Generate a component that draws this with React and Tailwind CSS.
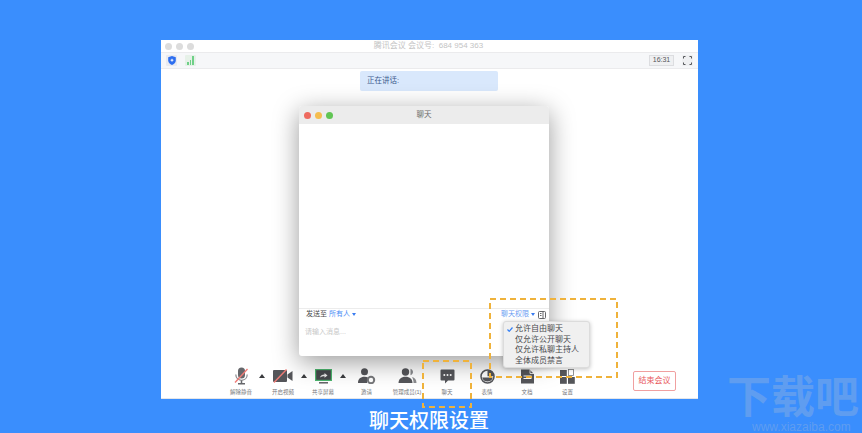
const cjk = "font-['Liberation_Sans','Noto_Sans_CJK_SC',sans-serif]";

const MicIcon = () => (
  <svg width="18" height="18" viewBox="0 0 18 18">
    <rect x="6" y="0.500" width="7" height="11" rx="3.500" fill="#66676b" />
    <path d="M3.800 7.500c0 3.400 2.400 5.800 5.700 5.800s5.700-2.400 5.700-5.800" fill="none" stroke="#8a8b8e" strokeWidth="1.200" />
    <path d="M9.500 13.500v2.500M6 16.800h7" stroke="#66676b" strokeWidth="1.500" />
    <path d="M3 15.500L15.500 2" stroke="#ef7b76" strokeWidth="1.400" />
  </svg>
);

const VideoIcon = () => (
  <svg width="20" height="14" viewBox="0 0 20 14">
    <rect x="0" y="1" width="14" height="12" rx="1" fill="#55565a" />
    <path d="M14.500 5.500L19.500 2v10l-5-3.500z" fill="#55565a" />
    <path d="M1 13.500L13.500 0.500" stroke="#ef7b76" strokeWidth="1.400" />
  </svg>
);

const ShareIcon = () => (
  <svg width="17" height="15" viewBox="0 0 17 15">
    <rect x="0.600" y="0.600" width="15.800" height="10.800" fill="#46484c" stroke="#4cb56e" strokeWidth="1.200" />
    <path d="M5 8.500c.6-2 2-3 4.500-3V4l3 2.500-3 2.300V7.200c-1.800 0-3.300.4-4.500 1.300z" fill="#e8e8e8" />
    <path d="M4 13.800h9" stroke="#55565a" strokeWidth="1.400" />
  </svg>
);

const InviteIcon = () => (
  <svg width="18" height="16" viewBox="0 0 18 16">
    <circle cx="6.500" cy="3.800" r="3.500" fill="#55565a" />
    <path d="M0 15c0-4 2.500-6.200 6.500-6.200 1.500 0 2.700.3 3.700.9-.8.900-1.200 2.100-1.200 3.300 0 .7.100 1.400.4 2z" fill="#55565a" />
    <circle cx="13" cy="12" r="3.200" fill="none" stroke="#77787b" strokeWidth="2" />
  </svg>
);

const MembersIcon = () => (
  <svg width="19" height="16" viewBox="0 0 19 16">
    <path d="M12.500 0.800c1.500.4 2.500 1.700 2.500 3.200s-1 2.800-2.500 3.200zM14 9c2.800.7 4.500 2.800 4.500 6h-3c0-2.400-.5-4.400-1.500-6z" fill="#8a8b8e" />
    <circle cx="7.500" cy="4" r="3.700" fill="#55565a" />
    <path d="M0.500 15c0-4 2.700-6.300 7-6.300s7 2.300 7 6.300z" fill="#55565a" />
  </svg>
);

const ChatIcon = () => (
  <svg width="15" height="15" viewBox="0 0 15 15">
    <path d="M1.500 0.500h12a1 1 0 0 1 1 1v9a1 1 0 0 1-1 1H8l-3 3v-3H1.500a1 1 0 0 1-1-1v-9a1 1 0 0 1 1-1z" fill="#55565a" />
    <circle cx="4.300" cy="6" r="1" fill="#fff" />
    <circle cx="7.500" cy="6" r="1" fill="#fff" />
    <circle cx="10.700" cy="6" r="1" fill="#fff" />
  </svg>
);

const EmojiIcon = () => (
  <svg width="15" height="15" viewBox="0 0 15 15">
    <circle cx="7.500" cy="7.500" r="6.500" fill="#fff" stroke="#55565a" strokeWidth="1.500" />
    <path d="M7.500 1v6.300h6.500A6.500 6.500 0 0 0 7.500 1z" fill="#55565a" />
    <path d="M2.200 8.500h10.600c-.4 2.400-2.700 4-5.300 4s-4.900-1.600-5.300-4z" fill="#55565a" />
  </svg>
);

const DocIcon = () => (
  <svg width="13" height="15" viewBox="0 0 13 15">
    <path d="M0 0.500h8.500L13 5v9.500H0z" fill="#55565a" />
    <path d="M2.500 7h8M2.500 9.500h8" stroke="#fff" strokeWidth="1.100" />
    <path d="M9 0.500V4.500h4" fill="none" stroke="#fff" strokeWidth="0.800" />
  </svg>
);

const SettingsIcon = () => (
  <svg width="15" height="15" viewBox="0 0 15 15">
    <rect x="0" y="1" width="6.800" height="6" fill="#55565a" />
    <rect x="8.500" y="0.500" width="5" height="6" fill="#fff" stroke="#77787b" strokeWidth="0.800" />
    <rect x="0" y="8" width="6.800" height="6.800" fill="#55565a" />
    <rect x="8" y="8" width="6.800" height="6.800" fill="#55565a" />
  </svg>
);

const Tool = ({ label, width, icon }) => (
  <div className={`flex flex-col items-center ${width}`}>
    <div className="flex h-[18px] items-center justify-center">{icon}</div>
    <span className="mt-[3px] whitespace-nowrap text-[5.500px] leading-[8px] text-[#77787b]">{label}</span>
  </div>
);

const Caret = ({ width }) => (
  <div className={`flex h-[18px] items-center justify-center ${width}`}>
    <div className="h-0 w-0 border-x-[3px] border-b-[4px] border-x-transparent border-b-[#3a3b3e]" />
  </div>
);

const Dot = ({ color }) => <div className={`h-[7px] w-[7px] rounded-full ${color}`} />;

const PopupRow = ({ label, checked }) => (
  <div className="flex h-[10.500px] items-center text-[8px] leading-[10px] text-[#47484c]">
    <span className="flex w-[11px] justify-end pr-[2px]">
      {checked && (
        <svg width="6" height="5" viewBox="0 0 6 5" fill="none" stroke="#2f7df6" strokeWidth="1.200">
          <path d="M0.500 2.500L2.200 4.300 5.500 0.500" />
        </svg>
      )}
    </span>
    {label}
  </div>
);

export default function App() {
  return (
    <div className={`relative h-[433px] w-[862px] overflow-hidden bg-[#3a8efd] pt-[40px] ${cjk}`}>
      <div className="ml-[161px] flex h-[359px] w-[537px] flex-col bg-white">
        <div className="relative flex h-[12px] items-center px-[4px]">
          <div className="flex gap-[4px]">
            <div className="h-[7px] w-[7px] rounded-full bg-[#dcdcdc]" />
            <div className="h-[7px] w-[7px] rounded-full bg-[#dcdcdc]" />
            <div className="h-[7px] w-[7px] rounded-full bg-[#dcdcdc]" />
          </div>
          <div className="flex-1 pr-[31px] text-center text-[8px] leading-[12px] text-[#c4c4c4]">腾讯会议 会议号:&nbsp; 684 954 363</div>
        </div>

        <div className="flex h-[17px] items-center border-y border-[#ebebed] bg-[#f6f7f9] pl-[5px] pr-[5px]">
          <div className="flex h-[11px] w-[11px] items-center justify-center rounded-[1px] bg-[#e9ebf0]">
            <svg width="8" height="9" viewBox="0 0 8 9">
              <path d="M4 0l3.800 1.200v3.300C7.800 6.700 6 8.200 4 9 2 8.200 .2 6.700 .2 4.500V1.200z" fill="#2e6ff0" />
              <path d="M4 2.800v2.800M2.600 4.200h2.800" stroke="#fff" strokeWidth="1" />
            </svg>
          </div>
          <div className="ml-[8px] flex h-[11px] w-[11px] items-end justify-center gap-[1px] rounded-[1px] bg-[#e6f1e8] pb-[1px]">
            <div className="h-[3px] w-[1.500px] bg-[#6fd088]" />
            <div className="h-[5px] w-[1.500px] bg-[#6fd088]" />
            <div className="h-[9px] w-[1.500px] bg-[#6fd088]" />
          </div>
          <div className="ml-auto flex h-[11px] w-[25px] items-center justify-center border border-[#dcdde0] bg-[#eff0f2] text-[7px] text-[#55565a]">16:31</div>
          <div className="ml-[8px] flex h-[11px] w-[11px] items-center justify-center bg-[#eff0f2]">
            <svg width="9" height="9" viewBox="0 0 9 9" fill="none" stroke="#55565a" strokeWidth="1">
              <path d="M0.500 2.500v-2h2M6.500 .5h2v2M8.500 6.500v2h-2M2.500 8.500h-2v-2" />
            </svg>
          </div>
        </div>

        <div className="flex-1">
          <div className="ml-[199px] mt-[2px] flex h-[20px] w-[138px] items-center rounded-[2px] bg-[#d9e8fc] pl-[7px] text-[7.500px] text-[#3d5a8c]">正在讲话:</div>
        </div>

        <div className="flex h-[32px] items-start border-b border-[#e4e6ea] pl-[62px]">
          <Tool width="w-[36px]" label="解除静音" icon={<MicIcon />} />
          <Caret width="w-[6px]" />
          <Tool width="w-[36px]" label="开启视频" icon={<VideoIcon />} />
          <Caret width="w-[5px]" />
          <Tool width="w-[34px]" label="共享屏幕" icon={<ShareIcon />} />
          <Caret width="w-[6px]" />
          <Tool width="w-[41px]" label="邀请" icon={<InviteIcon />} />
          <Tool width="w-[40px]" label="管理成员(1)" icon={<MembersIcon />} />
          <Tool width="w-[40px]" label="聊天" icon={<ChatIcon />} />
          <Tool width="w-[40px]" label="表情" icon={<EmojiIcon />} />
          <Tool width="w-[40px]" label="文档" icon={<DocIcon />} />
          <Tool width="w-[41px]" label="设置" icon={<SettingsIcon />} />
          <div className="ml-[45px] mt-[4px] flex h-[20px] w-[43px] items-center justify-center rounded-[2px] border border-[#f0a0a0] text-[8px] text-[#e8585c]">结束会议</div>
        </div>
      </div>

      <div className="mt-[10px] pr-[4px] text-center text-[20px] font-medium leading-[25px] text-white">聊天权限设置</div>

      {/* chat dialog */}
      <div className="absolute left-[299px] top-[106px] flex h-[250px] w-[250px] flex-col overflow-hidden rounded-[3px] bg-white shadow-[0_6px_26px_rgba(0,0,0,0.4)]">
        <div className="relative flex h-[18px] items-center gap-[4px] bg-[#ececec] pl-[5px]">
          <Dot color="bg-[#ee6a5f]" />
          <Dot color="bg-[#f5bd4f]" />
          <Dot color="bg-[#61c554]" />
          <span className="absolute left-0 right-0 text-center text-[7.500px] leading-[18px] text-[#6a6a6a]">聊天</span>
        </div>
        <div className="flex-1" />
        <div className="flex h-[48px] flex-col border-t border-[#ececec]">
          <div className="flex h-[11px] items-center pl-[7px] pr-[3px] text-[7px]">
            <span className="text-[#4a4a4a]">发送至</span>
            <span className="ml-[2px] text-[#4d8df6]">所有人</span>
            <div className="ml-[2px] h-0 w-0 border-x-[2px] border-t-[3px] border-x-transparent border-t-[#3a7cf0]" />
            <span className="ml-auto text-[#6b9df2]">聊天权限</span>
            <div className="ml-[2px] h-0 w-0 border-x-[2px] border-t-[3px] border-x-transparent border-t-[#3a7cf0]" />
            <svg className="ml-[3px]" width="8" height="8" viewBox="0 0 8 8" fill="none" stroke="#66676a" strokeWidth="1">
              <rect x="0.500" y="0.500" width="7" height="7" rx="1" />
              <path d="M5 .5v7M2 2.500h1.500M2 4.500h1.500" />
            </svg>
          </div>
          <div className="mt-[7px] pl-[6px] text-[7px] text-[#c8c8c8]">请输入消息...</div>
        </div>
      </div>

      {/* permission menu */}
      <div className="absolute left-[503px] top-[321px] h-[47px] w-[87px] rounded-[3px] border border-[#dcdcdc] bg-[#f0f0f0] py-[2px] shadow-[0_1px_4px_rgba(0,0,0,0.25)]">
        <PopupRow checked label="允许自由聊天" />
        <PopupRow label="仅允许公开聊天" />
        <PopupRow label="仅允许私聊主持人" />
        <PopupRow label="全体成员禁言" />
      </div>

      {/* annotations */}
      <svg className="pointer-events-none absolute left-0 top-0" width="862" height="433" fill="none" stroke="#efb23b" strokeWidth="2" strokeDasharray="6 4">
        <rect x="490" y="299" width="127" height="78" />
        <rect x="423" y="361" width="48" height="46" />
      </svg>

      {/* watermark */}
      <div className="absolute left-[727px] top-[376px] w-[135px] text-[#5f9df0]">
        <div className="whitespace-nowrap text-[44px] font-bold leading-[44px]">下载吧</div>
        <div className="ml-[25px] mt-[2px] whitespace-nowrap text-[12px] leading-[11px]">www.xiazaiba.com</div>
      </div>
    </div>
  );
}
